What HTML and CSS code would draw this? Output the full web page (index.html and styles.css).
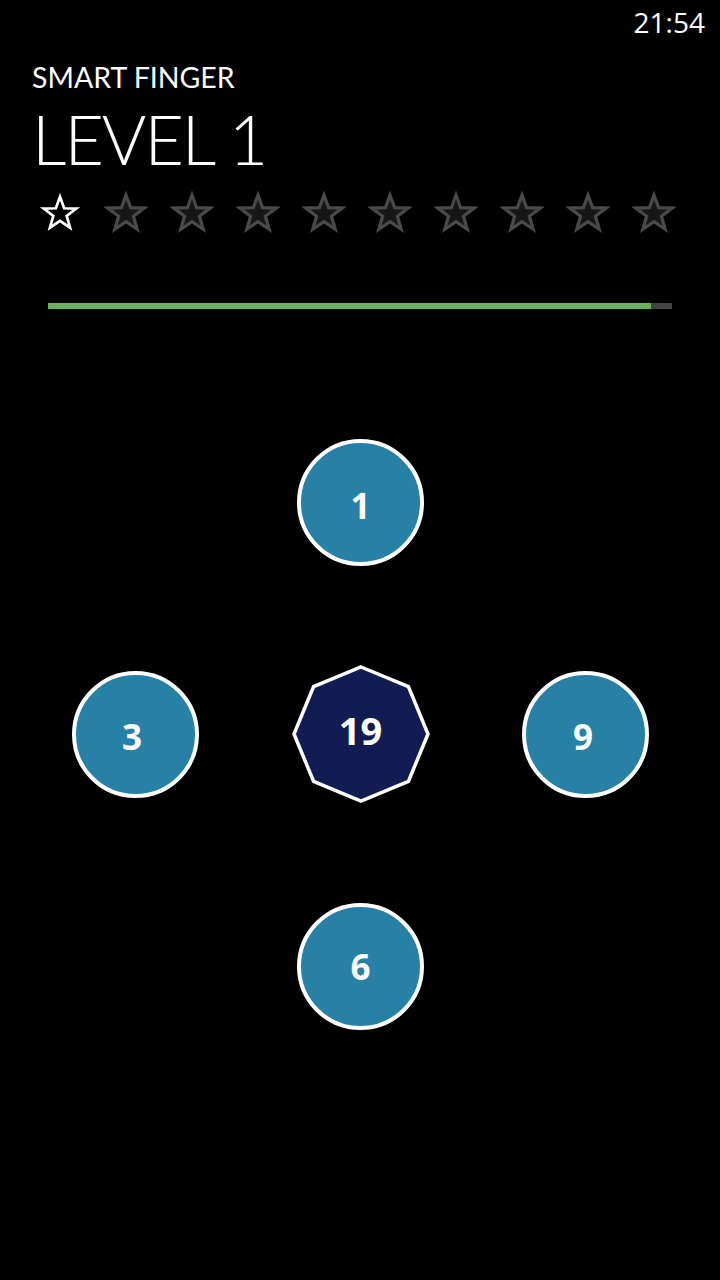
FILE: index.html
```html
<!DOCTYPE html>
<html>
<head>
<meta charset="utf-8">
<link rel="stylesheet" href="styles.css">
</head>
<body>
<div class="screen">
  <div class="status"><span class="time">21:54</span></div>
  <header class="header">
    <div class="app-title">SMART FINGER</div>
    <h1 class="level">LEVEL 1</h1>
  </header>
  <div class="stars">
    <svg class="star on" viewBox="0 0 44 44"><polygon points="22,4 26.6,16.7 40.1,17.1 29.4,25.3 33.2,38.3 22,30.7 10.8,38.3 14.6,25.3 3.9,17.1 17.4,16.7"/></svg>
    <svg class="star" viewBox="0 0 44 44"><polygon points="22,4 26.6,16.7 40.1,17.1 29.4,25.3 33.2,38.3 22,30.7 10.8,38.3 14.6,25.3 3.9,17.1 17.4,16.7"/></svg>
    <svg class="star" viewBox="0 0 44 44"><polygon points="22,4 26.6,16.7 40.1,17.1 29.4,25.3 33.2,38.3 22,30.7 10.8,38.3 14.6,25.3 3.9,17.1 17.4,16.7"/></svg>
    <svg class="star" viewBox="0 0 44 44"><polygon points="22,4 26.6,16.7 40.1,17.1 29.4,25.3 33.2,38.3 22,30.7 10.8,38.3 14.6,25.3 3.9,17.1 17.4,16.7"/></svg>
    <svg class="star" viewBox="0 0 44 44"><polygon points="22,4 26.6,16.7 40.1,17.1 29.4,25.3 33.2,38.3 22,30.7 10.8,38.3 14.6,25.3 3.9,17.1 17.4,16.7"/></svg>
    <svg class="star" viewBox="0 0 44 44"><polygon points="22,4 26.6,16.7 40.1,17.1 29.4,25.3 33.2,38.3 22,30.7 10.8,38.3 14.6,25.3 3.9,17.1 17.4,16.7"/></svg>
    <svg class="star" viewBox="0 0 44 44"><polygon points="22,4 26.6,16.7 40.1,17.1 29.4,25.3 33.2,38.3 22,30.7 10.8,38.3 14.6,25.3 3.9,17.1 17.4,16.7"/></svg>
    <svg class="star" viewBox="0 0 44 44"><polygon points="22,4 26.6,16.7 40.1,17.1 29.4,25.3 33.2,38.3 22,30.7 10.8,38.3 14.6,25.3 3.9,17.1 17.4,16.7"/></svg>
    <svg class="star" viewBox="0 0 44 44"><polygon points="22,4 26.6,16.7 40.1,17.1 29.4,25.3 33.2,38.3 22,30.7 10.8,38.3 14.6,25.3 3.9,17.1 17.4,16.7"/></svg>
    <svg class="star" viewBox="0 0 44 44"><polygon points="22,4 26.6,16.7 40.1,17.1 29.4,25.3 33.2,38.3 22,30.7 10.8,38.3 14.6,25.3 3.9,17.1 17.4,16.7"/></svg>
  </div>
  <div class="progress"><div class="progress-fill" style="width: 96.6%"></div></div>
  <div class="board">
    <div class="cell top"><div class="bubble">1</div></div>
    <div class="cell left"><div class="bubble">3</div></div>
    <div class="cell center">
      <div class="octagon">
        <svg viewBox="0 0 140 140"><polygon points="70,3 117.4,22.6 137,70 117.4,117.4 70,137 22.6,117.4 3,70 22.6,22.6"/></svg>
        <span class="oct-num">19</span>
      </div>
    </div>
    <div class="cell right"><div class="bubble">9</div></div>
    <div class="cell bottom"><div class="bubble">6</div></div>
  </div>
</div>
</body>
</html>
```

FILE: styles.css
```css
html, body {
  margin: 0;
  padding: 0;
  background: #000;
}
.screen {
  width: 720px;
  height: 1280px;
  background: #000;
  color: #fff;
  font-family: "Open Sans", "Noto Sans", sans-serif;
  overflow: hidden;
}
.status {
  display: flex;
  justify-content: flex-end;
  padding: 8px 15px 0 0;
  height: 28px;
}
.time {
  font-size: 28px;
  line-height: 28px;
  font-weight: 400;
}
.header {
  padding-left: 32px;
  margin-top: 27px;
  font-family: "Lato", "Open Sans", sans-serif;
}
.app-title {
  font-size: 28.5px;
  line-height: 29px;
  font-weight: 400;
}
.level {
  margin: 13px 0 0 0;
  font-size: 68px;
  line-height: 68px;
  font-weight: 300;
  letter-spacing: -2px;
}
.stars {
  display: flex;
  gap: 22px;
  padding-left: 38px;
  margin-top: 18px;
}
.star {
  width: 44px;
  height: 44px;
  display: block;
}
.star polygon {
  fill: #161616;
  stroke: #4a4a4a;
  stroke-width: 3.2;
  stroke-linejoin: miter;
}
.star.on polygon {
  fill: #000;
  stroke: #fff;
  stroke-width: 3;
  transform: scale(0.9);
  transform-origin: 22px 22px;
}
.progress {
  margin: 68px 0 0 48px;
  width: 624px;
  height: 6px;
  background: #444;
}
.progress-fill {
  height: 100%;
  background: #6aae5f;
}
.board {
  display: grid;
  grid-template-columns: repeat(3, 225px);
  grid-template-rows: repeat(3, 232px);
  margin: 77px 0 0 23px;
}
.cell {
  display: flex;
  align-items: center;
  justify-content: center;
}
.top { grid-column: 2; grid-row: 1; }
.left { grid-column: 1; grid-row: 2; }
.center { grid-column: 2; grid-row: 2; }
.right { grid-column: 3; grid-row: 2; }
.bottom { grid-column: 2; grid-row: 3; }
.bubble {
  box-sizing: border-box;
  width: 127px;
  height: 127px;
  border-radius: 50%;
  border: 4px solid #fff;
  background: #2780a6;
  display: flex;
  align-items: center;
  justify-content: center;
  font-size: 35px;
  font-weight: 700;
  padding-top: 7px;
}
.left .bubble { padding-right: 7px; padding-top: 5px; }
.right .bubble { padding-right: 5px; padding-top: 5px; }
.bottom .bubble { padding-top: 0; }
.octagon {
  position: relative;
  width: 140px;
  height: 140px;
  display: flex;
  align-items: center;
  justify-content: center;
}
.octagon svg {
  position: absolute;
  inset: 0;
  width: 140px;
  height: 140px;
}
.octagon polygon {
  fill: #111c52;
  stroke: #fff;
  stroke-width: 3.5;
}
.oct-num {
  position: relative;
  font-size: 38px;
  font-weight: 700;
  margin-top: -8px;
}
```
